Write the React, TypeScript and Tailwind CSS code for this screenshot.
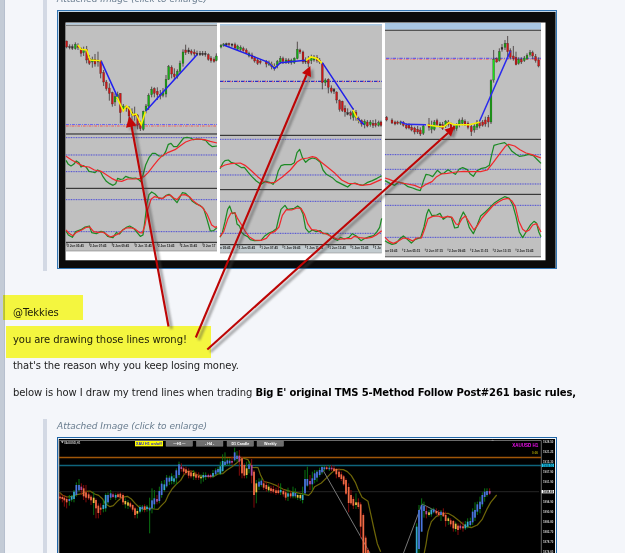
import React from 'react';

// "x high low open close kind", separated by commas, in third-pixel chart units
const PANEL_ONE =
  '200 122 145 123 141 r,209 133 148 140 143 k,217 133 150 140 145 k,226 127 149 133 146 g,234 130 150 138 142 r,243 142 170 146 160 r,251 140 168 148 158 g,260 138 190 148 180 r,268 165 195 175 190 r,277 170 203 178 186 g,285 162 200 178 192 r,294 155 200 180 186 k,302 180 235 182 220 r,311 210 258 218 246 r,319 240 272 246 266 r,328 250 302 264 280 r,337 275 320 278 312 r,345 280 318 290 306 g,353 275 300 284 296 g,361 280 370 280 338 r,370 312 335 318 330 g,379 315 335 320 326 r,387 318 365 324 348 r,396 325 360 336 344 k,404 320 362 342 348 r,413 342 388 346 376 r,421 362 393 370 386 r,430 332 392 334 388 g,438 312 340 318 332 g,446 280 330 286 318 g,455 260 292 268 284 g,463 262 292 266 280 r,472 262 300 274 284 r,481 270 298 284 288 r,489 264 292 278 286 g,498 225 292 238 282 g,506 195 240 200 238 g,515 196 235 202 222 r,523 205 240 222 230 r,532 208 236 214 230 g,540 182 220 190 214 g,549 148 200 156 190 g,557 134 165 150 158 r,566 143 162 150 156 k,574 148 166 153 160 r,583 148 170 156 162 r,591 152 168 160 164 k,600 153 168 160 164 k,608 153 168 160 164 k,616 153 170 160 164 k,625 160 182 164 178 r,633 168 188 174 182 r,642 172 188 178 184 r,649 160 184 168 182 g';

const PANEL_TWO =
  '18 132 145 136 141 g,26 129 140 132 136 g,34 128 139 131 135 k,42 128 140 131 134 r,51 130 141 132 136 k,60 128 148 134 144 r,68 134 152 138 148 g,77 136 153 142 149 g,85 140 155 146 152 r,94 145 162 150 160 r,102 155 172 160 168 g,111 158 178 165 175 r,119 168 188 174 183 r,128 174 195 180 190 r,136 180 193 184 188 r,154 180 202 186 192 r,162 182 198 187 194 g,170 185 208 192 200 r,178 190 212 198 206 g,187 180 205 185 195 g,196 168 192 175 186 g,204 170 192 176 184 r,213 174 192 180 185 g,221 175 192 180 186 r,229 176 194 181 188 g,238 172 192 175 188 g,247 125 178 148 176 g,255 146 162 150 156 r,264 152 192 156 186 r,272 172 192 180 186 k,280 168 202 178 190 r,289 164 192 172 182 g,297 165 185 171 180 g,306 165 188 172 182 r,314 174 192 180 186 r,322 188 268 190 248 r,331 235 258 240 248 g,340 235 280 238 262 r,349 256 280 264 274 r,357 264 282 268 274 k,365 274 310 276 300 r,374 298 335 302 328 r,382 302 336 304 332 r,390 316 350 325 336 r,398 325 346 338 343 k,407 332 358 338 346 r,415 325 362 334 352 g,423 330 362 337 352 r,431 350 370 355 362 r,440 358 380 362 372 r,449 358 385 364 374 g,457 360 382 366 378 r,466 360 380 366 374 g,474 360 384 370 376 r,482 358 382 370 376 r,491 362 380 368 376 g,498 362 380 366 376 r';

const PANEL_THREE =
  '20 348 364 352 360 r,36 355 372 360 369 r,45 362 376 366 372 r,53 362 374 366 370 r,62 362 375 366 370 g,70 363 380 367 376 r,79 370 388 376 384 r,87 370 388 376 384 r,95 374 394 382 390 r,104 380 403 384 396 r,113 378 402 388 396 r,121 382 408 390 402 r,130 373 405 378 400 g,147 354 392 372 382 r,155 362 400 376 388 g,163 360 392 366 388 g,171 356 378 362 374 r,180 366 384 372 378 k,188 366 390 374 386 r,197 360 384 364 378 g,205 360 380 366 374 r,213 368 388 372 384 r,222 372 394 378 388 r,230 370 392 374 386 g,238 356 382 362 372 g,247 352 376 360 370 g,255 358 378 364 374 r,264 364 388 370 382 r,274 372 408 380 395 r,283 370 398 378 390 g,291 360 390 366 382 g,299 360 385 368 378 r,308 360 380 366 376 r,316 350 380 360 372 r,325 345 382 352 366 r,333 238 372 242 366 g,341 150 248 178 240 l,350 172 188 176 186 r,358 145 185 155 182 g,366 132 155 142 148 k,375 120 150 130 142 g,383 108 172 130 155 r,391 145 178 152 172 r,400 138 182 168 176 r,408 155 196 172 194 r,416 172 194 178 190 g,424 172 192 178 186 r,433 168 186 174 182 g,441 160 180 166 176 g,450 150 170 158 164 g,458 152 178 158 168 r,467 162 188 170 182 r,476 172 202 180 198 r';

const GOLD_LEFT =
  '30 235 255 245 250 d,37 238 262 246 252 d,43 240 275 248 256 d,50 245 280 252 262 d,58 240 272 252 258 u,65 240 260 244 254 c,72 225 262 230 252 c,79 202 245 210 240 u,87 192 230 210 226 u,94 205 240 215 225 m,101 210 255 220 244 d,108 210 262 232 248 d,116 232 255 238 250 d,123 240 270 245 256 d,131 230 300 248 264 e,138 250 310 255 280 d,145 265 310 272 294 d,152 265 300 278 284 d,160 255 292 270 282 c,167 235 290 240 280 c,174 232 268 240 262 u,182 225 255 235 248 u,189 232 250 238 246 m,197 235 255 240 248 c,204 232 250 238 246 d,211 232 252 236 248 d,219 235 270 240 262 d,226 250 280 258 268 e,234 255 282 262 272 e,241 260 280 265 275 d,248 268 290 270 284 d,255 275 310 280 300 d,262 280 310 288 296 e,270 270 295 276 290 c,277 270 290 275 283 u,284 268 292 274 284 d,291 270 290 275 282 c,299 248 355 278 286 u,306 220 295 256 280 u,313 225 282 250 268 u,321 240 268 252 260 m,328 215 265 228 258 u,335 198 248 206 240 u,343 195 230 208 225 c,350 180 218 188 214 u,358 182 210 188 200 u,365 175 208 184 198 c,372 180 208 190 200 c,379 160 210 166 190 u,387 140 188 148 180 u,394 145 170 155 162 m,401 155 178 160 170 d,408 155 180 163 174 d,416 160 190 168 182 d,423 165 190 172 184 d,431 165 195 174 184 e,438 170 195 178 188 d,446 172 195 182 188 d,453 178 206 185 190 e,460 172 200 180 188 c,467 172 195 180 186 u,475 176 190 180 186 m,482 176 190 180 186 m,489 165 188 174 184 c,497 160 182 166 178 u,504 155 178 162 172 u,511 158 178 162 170 c';

const GOLD_MIDDLE =
  '1 140 180 154 176 c,8 118 172 138 168 c,15 112 155 140 150 u,22 130 152 136 146 u,29 130 152 137 145 u,36 125 150 138 143 m,44 98 140 112 136 u,51 108 140 122 132 u,58 105 182 122 140 m,66 125 190 130 175 d,73 145 190 150 182 d,80 140 190 160 180 e,87 138 175 148 162 u,95 132 205 150 182 m,102 165 278 170 240 d,109 195 265 205 232 e,117 190 225 200 215 u,124 190 215 197 210 u,131 195 225 205 218 d,139 200 230 210 222 d,146 208 232 215 226 e,153 212 235 220 228 d,160 212 235 222 230 d,168 218 240 226 234 d,175 205 238 226 234 d,182 205 240 225 232 c,190 222 245 228 238 d,197 228 256 232 248 d,204 218 258 235 245 c,212 228 250 235 244 d,219 215 250 232 244 c,226 220 250 234 244 u,233 235 255 240 248 e,241 236 258 240 250 e,248 215 265 240 255 c,255 165 240 192 235 u,262 155 215 192 212 u,270 180 225 198 208 m,277 170 225 190 208 u,284 165 205 175 195 u,291 165 200 170 188 u,299 158 185 165 180 u,306 152 178 156 172 u,313 152 168 157 163 u,320 152 165 157 162 d,328 150 168 158 163 u,335 150 168 158 163 m,342 152 170 160 168 d,349 160 190 162 178 d,357 160 190 170 186 d,364 170 198 178 192 d,371 180 212 184 208 d,378 190 240 195 236 d,386 205 292 216 264 d,393 225 270 240 265 d,400 245 282 252 272 d,408 235 282 262 270 e,415 250 282 262 276 d,422 262 370 268 335 d,430 295 420 300 420 d,437 362 420 368 420 d,444 400 420 405 420 d';

const GOLD_RIGHT =
  '80 325 420 335 420 c,87 270 420 285 402 u,95 250 350 270 350 u,102 260 308 272 288 u,109 275 310 288 298 m,117 285 305 292 300 e,124 280 305 284 298 c,131 278 295 283 292 u,139 280 300 288 295 d,146 285 305 292 300 d,153 285 318 290 300 u,160 280 305 292 304 d,167 290 335 300 318 d,175 305 330 310 318 e,182 310 335 316 328 d,190 315 350 318 340 d,197 320 350 326 342 e,204 325 360 332 345 d,211 325 345 332 340 m,219 320 350 334 340 d,226 318 345 328 340 c,233 310 340 320 335 c,241 308 335 318 330 u,248 280 330 290 322 u,255 262 318 285 308 u,262 260 300 268 290 u,270 245 295 260 282 u,277 232 275 240 268 u,284 220 260 230 246 u,291 220 245 228 240 u,299 220 240 228 236 m';

const BODY: Record<string, string> = {
  r: '#cf1616',
  g: '#12ad12',
  l: '#18e318',
  k: '#2c2c2c',
  u: '#4a72e0',
  c: '#35a9cf',
  d: '#f26b45',
  e: '#f0c040',
  m: '#b04a9a',
};

const WICK: Record<string, string> = {
  u: '#0b7d12',
  c: '#0b7d12',
  e: '#0b6d12',
  d: '#8e0c0c',
  m: '#8e0c0c',
};

const Candles = ({ data, width = 5.6 }: { data: string; width?: number }) => (
  <>
    {data.split(',').map((row) => {
      const [x, high, low, top, bottom, kind] = row.split(' ');
      return (
        <g key={x}>
          <path d={`M${x} ${high}V${low}`} stroke={WICK[kind] ?? '#3a3030'} strokeWidth={WICK[kind] ? 2.8 : 2.4} />
          <rect
            x={Number(x) - width / 2}
            y={top}
            width={width}
            height={Number(bottom) - Number(top)}
            fill={BODY[kind]}
            stroke={WICK[kind] ? 'none' : '#332222'}
            strokeWidth="0.8"
          />
        </g>
      );
    })}
  </>
);

const Levels = ({ x1, x2, ys }: { x1: number; x2: number; ys: number[] }) => (
  <>
    {ys.map((y) => (
      <path key={y} d={`M${x1} ${y}H${x2}`} stroke="#4040d8" strokeWidth="2.8" strokeDasharray="3 2" />
    ))}
  </>
);

const Separators = ({ x1, x2, ys }: { x1: number; x2: number; ys: number[] }) => (
  <>
    {ys.map((y) => (
      <path key={y} d={`M${x1} ${y}H${x2}`} stroke="#1d1d1d" strokeWidth="3" />
    ))}
  </>
);

const Curve = ({ points, color }: { points: string; color: string }) => (
  <polyline points={points} stroke={color} strokeWidth="3.7" strokeLinejoin="round" />
);

const GREEN = '#1c8a24';
const RED = '#f0282c';

const TimeAxis = ({ x, y, step, labels }: { x: number; y: number; step: number; labels: string[] }) => (
  <g fill="#222" fontFamily="Liberation Sans, Arial, sans-serif" fontSize="11" fontWeight="bold">
    {labels.map((label, i) => (
      <text key={label} x={x + i * step} y={y} textLength={label.length * 4.5} lengthAdjust="spacingAndGlyphs">
        {label}
      </text>
    ))}
  </g>
);

const ComparisonChart = () => (
  <svg className="block h-[259px] w-[500px]" viewBox="57 10 500 259" fill="none">
    <rect x="57" y="10" width="500" height="259" fill="#3477b5" />
    <rect x="58" y="11" width="498" height="257" fill="#c5d6e5" />
    <rect x="59" y="12" width="496.500" height="256" fill="#0b0b0b" />
    <rect x="65.500" y="260" width="480" height="1" fill="#4b4e4e" />
    <rect x="65.500" y="22.500" width="480" height="237.500" fill="#fff" />
    <rect x="66" y="24.500" width="151" height="226.500" fill="#c0c0c0" />
    <rect x="66" y="23" width="151" height="1.500" fill="#b4cde2" />
    <rect x="220" y="24" width="162" height="229" fill="#c0c0c0" />
    <rect x="220" y="24" width="162" height="1.500" fill="#a8c8e4" />
    <rect x="220" y="245.500" width="162" height="7.500" fill="#c3ccd0" />
    <rect x="385" y="23" width="156" height="234.500" fill="#c0c0c0" />
    <rect x="385" y="23" width="156" height="6.500" fill="#a9c6e2" />

    <g transform="scale(.33333)">
      <path d="M198 76H651" stroke="#6c6c6c" strokeWidth="3" />
      <path d="M198 373.500H651" stroke="#6a6af0" strokeWidth="3" strokeDasharray="9 3 3 3" />
      <path d="M198 378H651" stroke="#f05c5c" strokeWidth="3.500" strokeDasharray="8 3 3 3" />
      <Candles data={PANEL_ONE} />
      <path d="M234 135L243 148L260 150L270 180L302 182M350 290L370 333L380 318L390 328L398 345L408 342L424 374L436 335" stroke="#f8f000" strokeWidth="4.500" />
      <path d="M304 184L352 290M438 332L591 164" stroke="#2020f0" strokeWidth="4.500" />
      <Separators x1={198} x2={651} ys={[402]} />
    </g>
    <g transform="translate(55 125) scale(.33333)">
      <Levels x1={33} x2={486} ys={[38, 90, 140, 224, 320]} />
      <Separators x1={33} x2={486} ys={[190, 352]} />
      <path d="M33 378H486" stroke="#8b8b8b" strokeWidth="2" />
      <Curve color={GREEN} points="33,106 40,118 48,123 56,118 64,108 72,113 78,126 86,122 94,127 102,139 112,141 120,143 128,135 136,139 144,155 154,169 164,176 174,181 182,176 188,160 196,163 204,162 212,154 222,158 232,160 242,159 250,163 258,170 264,150 272,120 282,98 292,85 300,85 312,93 324,93 332,80 340,58 348,55 356,65 366,65 376,52 386,39 396,37 406,39 416,44 426,42 440,43 452,46 462,58 472,65 486,63" />
      <Curve color={RED} points="33,94 50,105 68,115 86,124 102,126 118,135 138,139 154,149 170,160 184,167 200,169 218,162 238,162 256,160 268,154 280,142 296,121 310,104 322,92 340,82 360,74 376,62 392,51 408,45 426,42 448,44 466,49 486,54" />
      <Curve color={GREEN} points="33,318 40,330 52,337 62,320 78,314 90,306 103,303 110,323 124,326 138,319 148,322 158,334 174,338 184,323 194,327 204,314 216,306 224,303 236,310 246,322 256,334 264,330 270,285 276,235 282,209 290,201 300,207 312,220 324,219 334,211 342,208 352,217 366,233 374,218 382,203 392,205 402,215 412,229 424,237 436,242 446,251 456,283 466,318 476,317 486,308" />
      <Curve color={RED} points="33,315 42,325 54,332 64,322 80,315 94,307 104,306 116,320 130,322 142,321 152,326 166,336 178,332 190,327 202,316 214,309 226,308 240,312 254,323 262,324 270,300 278,255 288,223 298,215 310,218 322,221 334,212 346,210 356,219 366,224 378,210 390,209 404,216 416,229 430,239 442,247 456,267 470,300 480,307 486,305" />
      <TimeAxis x={37} y={366} step={68} labels={['2 Jun 05:45', '2 Jun 07:45', '2 Jun 09:45', '2 Jun 11:45', '2 Jun 13:45', '2 Jun 15:45', '2 Jun 17']} />
      <path d="M36 352v10M104 352v10M172 352v10M240 352v10M308 352v10M376 352v10M444 352v10" stroke="#333" strokeWidth="2" />
    </g>

    <g transform="translate(215 0) scale(.33333)">
      <path d="M15 244H500" stroke="#2c2cc8" strokeWidth="4" strokeDasharray="12 3 3 3" />
      <path d="M24 245H500" stroke="#e86a78" strokeWidth="3" strokeDasharray="6 15" />
      <path d="M15 266H500" stroke="#8b98ac" strokeWidth="2" />
      <Candles data={PANEL_TWO} />
      <path d="M160 187L179 202M272 182L288 171L305 175L322 190M414 330L426 355L434 364" stroke="#f8f000" strokeWidth="5" />
      <path d="M26 135L160 187L179 205L196 188L272 181M322 188L415 328M426 354L447 374" stroke="#2020ea" strokeWidth="4.500" />
      <Separators x1={15} x2={500} ys={[406]} />
    </g>
    <g transform="translate(215 130) scale(.33333)">
      <Levels x1={15} x2={500} ys={[28, 135, 214, 310]} />
      <Separators x1={15} x2={500} ys={[179, 344]} />
      <path d="M15 369H500" stroke="#9a9a9a" strokeWidth="2" />
      <Curve color={GREEN} points="15,116 24,98 30,92 40,90 48,97 58,100 68,106 80,113 88,112 98,125 110,139 124,153 138,163 152,154 164,157 174,163 182,151 190,122 198,107 208,104 228,104 238,98 246,68 254,58 262,82 272,97 282,88 292,84 304,87 316,97 324,120 334,133 352,143 364,154 376,160 388,166 398,171 408,162 420,159 430,163 444,166 456,158 472,152 486,145 500,137" />
      <Curve color={RED} points="15,112 30,105 48,101 76,99 90,106 110,123 128,140 144,153 162,159 180,157 202,141 226,120 246,96 260,87 278,84 292,80 304,83 318,96 338,112 360,130 380,150 400,160 420,161 440,166 466,163 486,154 500,148" />
      <Curve color={GREEN} points="15,322 22,308 30,275 38,238 44,228 52,251 60,248 66,282 74,289 80,307 88,315 98,320 106,329 118,332 138,331 150,317 162,309 174,304 184,296 190,270 198,238 210,226 218,238 238,235 248,228 256,234 264,252 272,295 282,307 292,300 304,305 316,302 324,311 336,310 346,318 358,327 368,331 376,322 388,327 402,322 412,311 424,318 438,332 450,325 464,320 476,317 486,305 494,292 500,265" />
      <Curve color={RED} points="15,320 26,305 38,268 48,249 60,249 68,266 80,285 90,303 102,320 118,330 138,331 154,325 166,310 180,304 192,291 202,256 214,239 230,240 246,234 258,235 268,252 278,281 290,299 304,300 318,307 334,312 350,320 368,328 392,326 408,326 418,319 434,323 452,325 470,322 484,315 500,302" />
      <TimeAxis x={15} y={356} step={0} labels={['n 05:45']} />
      <TimeAxis x={71} y={356} step={68} labels={['1 Jun 05:45', '1 Jun 07:45', '1 Jun 09:45', '1 Jun 11:45', '1 Jun 13:45', '1 Jun 15:45', '1 Ju']} />
      <path d="M68 344v10M136 344v10M204 344v10M272 344v10M340 344v10M408 344v10M476 344v10" stroke="#333" strokeWidth="2" />
    </g>

    <g transform="translate(380 0) scale(.33333)">
      <path d="M15 91H483" stroke="#555" strokeWidth="4" />
      <path d="M18 175H483" stroke="#5a5af0" strokeWidth="4" strokeDasharray="10 4 3 3" />
      <path d="M18 178H483" stroke="#f07070" strokeWidth="3" strokeDasharray="8 5 3 4" />
      <Candles data={PANEL_THREE} />
      <path d="M142 375L170 379L192 380L207 368L222 374L268 374L299 367" stroke="#f8f000" strokeWidth="4.500" />
      <path d="M62 366L80 373L138 374M299 363L391 153" stroke="#2a2aee" strokeWidth="4.500" />
    </g>
    <g transform="translate(380 130) scale(.33333)">
      <Levels x1={15} x2={483} ys={[74, 118, 162, 226, 322]} />
      <Separators x1={15} x2={483} ys={[28, 193]} />
      <path d="M15 380H483" stroke="#555" strokeWidth="2.500" />
      <Curve color={GREEN} points="15,152 30,160 44,166 56,156 70,160 84,170 98,174 110,179 121,182 130,154 138,133 148,135 158,140 172,121 184,131 192,129 204,119 216,127 226,133 238,117 248,113 262,119 270,131 280,139 290,123 302,116 316,113 328,106 336,70 342,46 356,42 374,38 384,47 396,64 408,73 418,79 432,77 446,73 460,77 470,87 483,100" />
      <Curve color={RED} points="15,144 28,148 42,154 60,158 82,162 104,166 122,174 138,163 156,155 170,140 184,132 202,130 228,126 252,124 276,125 302,125 322,120 340,97 360,70 376,49 386,43 404,48 420,59 438,69 456,74 470,79 483,84" />
      <Curve color={GREEN} points="15,332 24,338 36,343 48,340 58,328 70,318 82,328 94,339 106,328 122,323 132,291 140,253 146,238 156,257 170,255 180,250 190,268 202,259 214,262 224,294 234,292 240,268 250,246 258,260 268,293 280,311 292,284 302,258 316,246 330,232 344,218 360,208 374,200 388,205 398,224 408,260 418,306 428,323 440,303 452,284 462,274 470,280 476,305 483,320" />
      <Curve color={RED} points="15,322 28,335 40,340 54,334 70,324 84,326 98,333 110,324 124,324 134,297 144,266 158,259 174,258 188,263 204,259 216,262 228,282 236,284 246,266 256,258 268,278 282,300 292,287 306,264 322,246 338,228 354,217 370,208 384,205 396,213 406,230 416,272 428,298 438,305 448,300 458,285 470,281 483,306" />
      <TimeAxis x={16} y={367} step={0} labels={['un 03:45']} />
      <TimeAxis x={71} y={367} step={68} labels={['2 Jun 05:15', '2 Jun 07:15', '2 Jun 09:45', '2 Jun 11:15', '2 Jun 13:15', '2 Jun 15:45']} />
      <path d="M68 356v6M136 356v6M204 356v6M272 356v6M340 356v6M408 356v6" stroke="#333" strokeWidth="2" />
    </g>
  </svg>
);

const TABS = [
  { label: '—H1—', x: 348 },
  { label: '- H4 -', x: 439 },
  { label: 'D1 Candle', x: 531 },
  { label: 'Weekly', x: 621 },
];

const PRICES = ['1928.50', '1921.25', '1915.30', '1907.90', '1901.90', '', '1894.90', '1890.90', '1886.80', '1882.70', '1878.70', '1874.60'];

const GoldChart = () => (
  <svg className="block h-[120px] w-[500px]" viewBox="57 437 500 120" fill="none">
    <rect x="57" y="437" width="500" height="120" fill="#2066a8" />
    <rect x="58" y="438" width="498" height="119" fill="#eef4f7" />
    <rect x="58.800" y="439" width="496.200" height="118" fill="#000" />
    <path d="M59 440.500H541.300V557" stroke="#6a6a6a" strokeWidth="1" />
    <path d="M59.400 440V557" stroke="#444" strokeWidth=".8" />
    <path d="M59 457.500H541" stroke="#a05608" strokeWidth="1.300" />
    <path d="M59 465.500H541" stroke="#0f647c" strokeWidth="1.300" />
    <path d="M59 491.700H539" stroke="#252525" strokeWidth="1" />

    <g transform="translate(50 415) scale(.33333)">
      <path d="M33 79l8 0-4 6z" fill="#ddd" />
      <g fontFamily="Liberation Sans, Arial, sans-serif" fontWeight="bold" fontSize="11">
        <text x="42" y="86" fill="#ccc" fontSize="10" textLength="49" lengthAdjust="spacingAndGlyphs">XAUUSD,H1</text>
        <rect x="255" y="78" width="84" height="16" fill="#ffff00" />
        <text x="258" y="90" fill="#1515dd" textLength="77">XAU H1 on/off</text>
        {TABS.map(({ label, x }) => (
          <g key={label}>
            <rect x={x} y="78" width="80" height="16" fill="#6e6e6e" stroke="#888" />
            <text x={x + 40} y="90" fill="#fff" textAnchor="middle">{label}</text>
          </g>
        ))}
      </g>
      <Curve color="#6d6508" points="28,232 38,241 52,246 66,244 80,239 96,236 108,229 120,228 134,237 146,241 158,252 166,266 180,275 190,272 204,257 216,247 232,244 244,252 256,266 270,279 284,284 298,279 312,282 324,283 334,272 346,260 354,242 366,222 378,209 392,196 402,179 414,168 430,169 440,179 460,184 490,185 504,177 518,176 530,166 546,155 560,144 578,129 594,134 606,157 624,158 632,181 642,200 660,204 680,212 700,223 724,230 754,236 776,241 784,233 794,215 814,204 828,190 844,174 858,163 880,164 892,170 904,182 916,202 924,222 936,247 954,259 962,296 972,342 982,386 992,410" />
      <Candles data={GOLD_LEFT} width={5.2} />
    </g>
    <g transform="translate(220 415) scale(.33333)">
      <path d="M306 160L452 418" stroke="#777" strokeWidth="3" />
      <Candles data={GOLD_MIDDLE} width={5.2} />
    </g>
    <g transform="translate(390 415) scale(.33333)">
      <path d="M39 418L96 267L150 294" stroke="#777" strokeWidth="3" />
      <Curve color="#6d6508" points="102,418 108,388 114,350 124,320 138,305 154,297 174,295 190,304 208,318 226,334 244,338 262,330 276,314 290,284 302,262 320,240" />
      <Candles data={GOLD_RIGHT} width={5.2} />
      <path d="M303 77h10l-5-3z" fill="#999" />
      <g fontFamily="Liberation Sans, Arial, sans-serif" fontWeight="bold">
        <text x="367" y="97" fill="#f010f0" fontSize="14" textLength="78" lengthAdjust="spacingAndGlyphs">XAUUSD H1</text>
        <text x="426" y="117" fill="#a8a000" fontSize="9" textLength="18">0:00</text>
        <rect x="455" y="146" width="37" height="10" fill="#18c8f0" />
        <rect x="455" y="225" width="37" height="10" fill="#fff" />
        {PRICES.map((price, i) => (
          <text key={i} x="459" y={83 + i * 30} fill="#c8c8c8" fontSize="10" textLength="31" lengthAdjust="spacingAndGlyphs">
            {price}
          </text>
        ))}
        <text x="458" y="155" fill="#074a60" fontSize="10" textLength="32">1909.50</text>
        <text x="458" y="234" fill="#222" fontSize="10" textLength="32">1898.89</text>
      </g>
    </g>
  </svg>
);

const ARROWS = [
  { line: 'M168.500 326.500L131.500 126', head: 'M129.300 116L136.500 125.500L126 127.800Z' },
  { line: 'M195.800 337.500L306.500 75', head: 'M310.300 66L311 77L302 73Z' },
  { line: 'M207.300 349.500L448 133', head: 'M454.500 126.500L451 136.500L444.500 129.500Z' },
];

const Arrows = () => (
  <svg className="pointer-events-none absolute inset-0 h-[553px] w-[625px]" viewBox="0 0 625 553" fill="none">
    <defs>
      <filter id="soft" x="-10%" y="-10%" width="120%" height="120%">
        <feGaussianBlur stdDeviation="1" />
      </filter>
    </defs>
    {ARROWS.map(({ line, head }) => (
      <g key={line}>
        <g transform="translate(3 2.500)" filter="url(#soft)" opacity=".45">
          <path d={line} stroke="#444" strokeWidth="3" />
          <path d={head} fill="#444" />
        </g>
        <path d={line} stroke="#bd0505" strokeWidth="2.100" />
        <path d={head} fill="#c40606" />
      </g>
    ))}
  </svg>
);

const Attachment = ({ children }: { children: React.ReactNode }) => (
  <div className="ml-[38px] border-l-4 border-[#d3d9e4] pl-[10px]">
    <p className="h-[18px] text-[9px] leading-[14px] tracking-[-0.02px] whitespace-nowrap text-[#687c8e] italic">Attached Image (click to enlarge)</p>
    {children}
  </div>
);

const App: React.FC = () => {
  return (
    <div className="relative flex h-[553px] w-[625px] overflow-hidden bg-[#f4f6fa] font-['DejaVu_Sans',Verdana,sans-serif]">
      <aside className="w-[5px] shrink-0 border-r border-[#b6bfce] bg-[#c3cbd6]" />

      <main className="-mt-2 flex flex-col">
        <Attachment>
          <ComparisonChart />
          <div className="h-[2px]" />
        </Attachment>

        <div className="flex flex-col pt-[29px] pb-[12px] pl-2 text-[10px] leading-[26.7px] tracking-[-0.08px] whitespace-nowrap text-[#1c1c1c]">
          <p>@Tekkies</p>
          <p>you are drawing those lines wrong!</p>
          <p>that's the reason why you keep losing money.</p>
          <p>
            below is how I draw my trend lines when trading{' '}
            <strong className="tracking-[-0.14px] text-black">Big E' original TMS 5-Method Follow Post#261 basic rules,</strong>
          </p>
        </div>

        <Attachment>
          <GoldChart />
        </Attachment>
      </main>

      <div className="absolute top-[295px] left-[3px] h-[25px] w-[80px] bg-[#ffff40] mix-blend-multiply" />
      <div className="absolute top-[326px] left-[6px] h-[32px] w-[205px] bg-[#ffff40] mix-blend-multiply" />
      <Arrows />
    </div>
  );
};

export default App;
